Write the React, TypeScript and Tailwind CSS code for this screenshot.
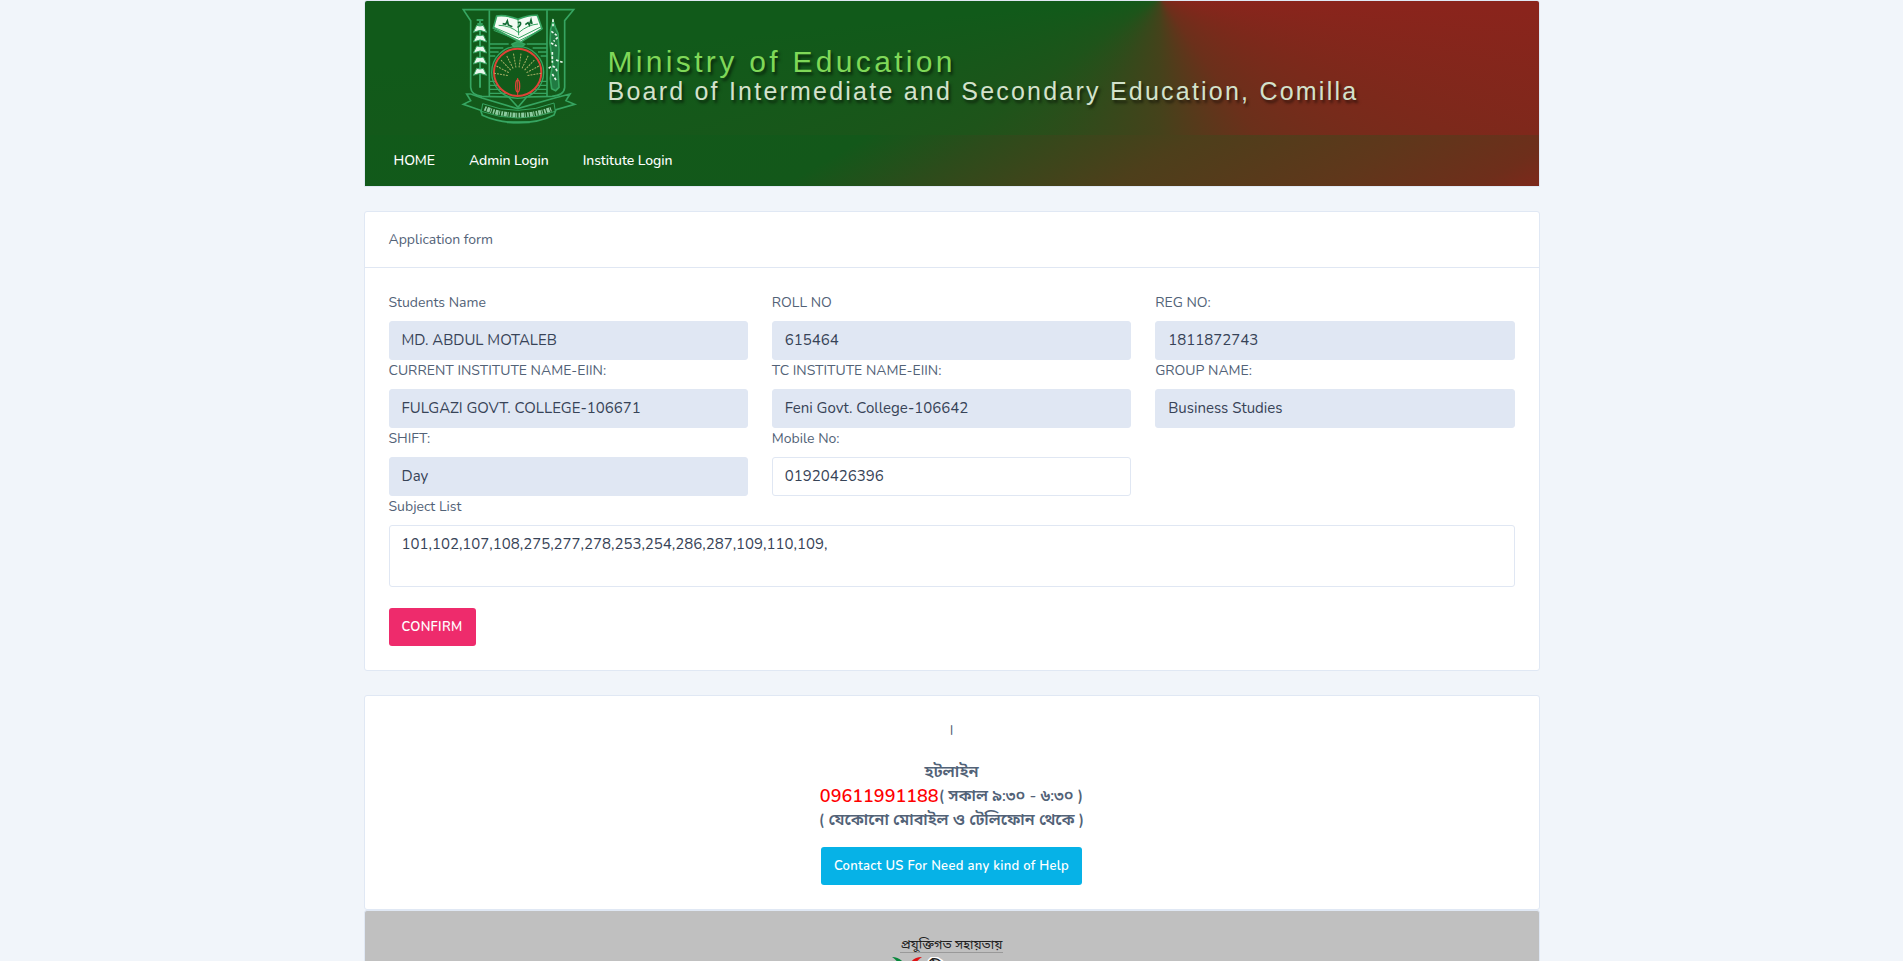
import type { ReactNode } from "react";

function Emblem() {
  const stalk = [88, 117, 150, 183, 217];
  const rays = [-80, -62, -44, -27, -10, 8, 26, 44, 62, 80];
  return (
    <svg viewBox="0 3 420 387" className="h-[129px] w-[140px] shrink-0" fill="none" stroke="#36a561" strokeWidth="5">
      <path d="M40 29H371L344 62V262Q342 286 306 289L230 291L204 322L176 291L96 289Q64 286 62 262V62Z" />
      <path d="M118 31V288M291 31V288" />
      <path d="M118 132H176M230 132H291M118 144H160M248 144H291M118 156H146M264 156H291M118 168H136M272 168H291M118 244H138M270 244H291M118 256H146M262 256H291M118 268H156M252 268H291M118 280H170M238 280H291" strokeWidth="4" />
      <path d="M186 133L204 124L224 133L216 140H192Z" fill="#2f9b57" />
      <path d="M140 48Q170 44 204 58Q238 44 262 46L276 86L211 127L130 84Z" fill="#f4fbf4" />
      <path d="M132 82L206 114L274 80M131 91L208 122L276 88" strokeWidth="3" />
      <path d="M204 58L206 106M146 76Q180 76 206 98Q234 74 264 72" strokeWidth="3" />
      <path d="M158 71l9 2 5-10 3 12 12 5M226 74l8-6 4 7 5-15 3 12M204 68q10-4 7 6q-4 8-9 7" stroke="#126b34" strokeWidth="5" />
      <path d="M90 60V263M80 60H100M82 72H98" strokeWidth="6" />
      {stalk.map((y) => (
        <path key={y} d={`M90 ${y - 10}L80 ${y - 12}L70 ${y + 9}L90 ${y + 3}L110 ${y + 9}L100 ${y - 12}Z`} fill="#e9f7ec" strokeWidth="3" />
      ))}
      <path d="M309 62L302 88L300 130L308 190L301 235L305 266L317 272L327 262L324 210L327 150L324 100L316 82Z" fill="#207b42" />
      <path d="M309 58V80M304 94L320 106M323 112L311 124M303 129L320 138M307 156V188M296 205Q312 190 321 214M318 180L341 188M307 222L318 240" stroke="#eaf7ec" strokeWidth="5" strokeDasharray="8 5" />
      <circle cx="203" cy="217" r="78" strokeWidth="4" />
      <ellipse cx="203" cy="217" rx="71" ry="71" stroke="#df4337" strokeWidth="6" />
      <g stroke="#a9b065" strokeWidth="3" strokeDasharray="6 3">
        {rays.map((angle) => (
          <path key={angle} d="M203 202V158" transform={`rotate(${angle} 203 232)`} />
        ))}
      </g>
      <ellipse cx="203" cy="258" rx="6" ry="18" stroke="#df4337" strokeWidth="4" />
      <path d="M203 234V288" stroke="#df4337" strokeWidth="3" />
      <path d="M62 282L50 282L62 302L40 313L92 331L97 346Q145 368 206 368Q268 368 312 345L318 329L374 313L348 302L360 282L314 294L203 326L96 294Z" strokeWidth="5" />
      <path d="M98 311Q202 352 312 309L316 334Q204 374 94 334Z" strokeWidth="3" />
      <path d="M104 325Q204 365 307 326" stroke="#8ccb9f" strokeWidth="14" strokeDasharray="5 3 9 2 3 4" />
      <path d="M171 367H239" strokeWidth="6" />
    </svg>
  );
}

function Card({ children, className = "" }: { children: ReactNode; className?: string }) {
  return <div className={`border border-[#e0e8f4] ${className}`}>{children}</div>;
}

function Field({ label, value, open = false }: { label: string; value: string; open?: boolean }) {
  return (
    <div>
      <div className="mb-2 h-[21px] text-sm leading-[21px]">{label}</div>
      <div className={`h-[39px] rounded-[3px] border border-[#e0e7f3] px-3 text-[15px] leading-[37px] text-[#374357] ${open ? "bg-white" : "bg-[#e0e7f3]"}`}>
        {value}
      </div>
    </div>
  );
}

export default function App() {
  return (
    <div className="h-screen overflow-hidden bg-[#f1f5fa] font-['Nunito','Noto_Sans_Bengali',sans-serif] text-sm text-[#526277]">
      <div className="mx-auto flex w-[1176px] flex-col">
        <Card className="mb-6 h-[187px] overflow-hidden rounded-t-[3px]">
          <div className="flex h-[134px] bg-[conic-gradient(at_795px_-4px,#8a241c_0deg,#8a241c_92deg,#7c291b_115deg,#6b301b_145deg,#45421b_180deg,#35491b_205deg,#1e541a_235deg,#115a1a_265deg,#115a1a_300deg,#8a241c_300deg)] pl-[85px]">
            <Emblem />
            <div className="pl-[18px] pt-[43px] font-['Liberation_Sans',Arial,sans-serif] whitespace-nowrap [text-shadow:2px_3px_3px_rgba(0,0,0,0.55)]">
              <div className="h-[31px] text-[30px] leading-[36px] tracking-[3.33px] text-[#7fd858]">Ministry of Education</div>
              <div className="text-[25px] leading-[32px] tracking-[2.22px] text-[#d3e2cc]">Board of Intermediate and Secondary Education, Comilla</div>
            </div>
          </div>
          <nav className="flex h-[51px] gap-[34px] bg-[linear-gradient(150deg,#115a1a_0%,#13581a_40%,#2c4c1b_50%,#4d3f1b_66%,#5f371b_83%,#6e2e1b_95%,#7d281b_100%)] pl-[29px] pt-[15px] text-sm leading-[21px] font-medium tracking-[-0.07px] text-white">
            <a>HOME</a>
            <a>Admin Login</a>
            <a>Institute Login</a>
          </nav>
        </Card>

        <Card className="mb-6 h-[460px] rounded-[3px] bg-white">
          <div className="h-14 border-b border-[#e0e7f3] px-6 pt-[17px] leading-[21px]">Application form</div>
          <div className="p-6">
            <div className="grid grid-cols-3 gap-x-6">
              <Field label="Students Name" value="MD. ABDUL MOTALEB" />
              <Field label="ROLL NO" value="615464" />
              <Field label="REG NO:" value="1811872743" />
              <Field label="CURRENT INSTITUTE NAME-EIIN:" value="FULGAZI GOVT. COLLEGE-106671" />
              <Field label="TC INSTITUTE NAME-EIIN:" value="Feni Govt. College-106642" />
              <Field label="GROUP NAME:" value="Business Studies" />
              <Field label="SHIFT:" value="Day" />
              <Field label="Mobile No:" value="01920426396" open />
            </div>
            <div className="mb-2 leading-[21px]">Subject List</div>
            <div className="mb-[21px] h-[62px] rounded-[3px] border border-[#e0e7f3] px-3 text-[15px] leading-[37px] text-[#374357]">
              101,102,107,108,275,277,278,253,254,286,287,109,110,109,
            </div>
            <button className="h-[38px] w-[87px] rounded-[3px] bg-[#ee2b6c] text-[13px] font-semibold tracking-[0.3px] text-white">CONFIRM</button>
          </div>
        </Card>

        <Card className="h-[215px] rounded-[3px] bg-white pt-6 text-center">
          <div className="leading-[21px]">I</div>
          <div className="mt-[19px] h-6 text-[16.5px] font-semibold leading-6">হটলাইন</div>
          <div className="flex h-6 items-center justify-center text-[16.1px] font-semibold">
            <span className="text-lg font-semibold text-[#ff0000]">09611991188</span>
            <span>( সকাল ৯:৩০ - ৬:৩০ )</span>
          </div>
          <div className="h-6 text-[16.1px] font-semibold leading-6">( যেকোনো মোবাইল ও টেলিফোন থেকে )</div>
          <button className="mt-[15px] h-[38px] w-[261px] rounded-[3px] bg-[#06b2e7] text-[13px] font-semibold tracking-[0.3px] text-white">
            Contact US For Need any kind of Help
          </button>
        </Card>

        <Card className="h-[120px] rounded-t-[3px] bg-[#c0c0c0] pt-6 text-center">
          <div className="mx-auto h-[18px] w-[103px] border-b border-[#999] text-[13px] leading-[20px] whitespace-nowrap text-[#222]">প্রযুক্তিগত সহায়তায়</div>
          <svg viewBox="0 0 120 24" className="mx-auto mt-1 h-6 w-[120px]">
            <path d="M0 0Q7 0 12 6L10 12Q6 4 0 0Z" fill="#07883b" />
            <path d="M30 0Q21 0 18 7L20 12Q24 4 30 0Z" fill="#df1114" />
            <text x="36" y="20" fontSize="20" fill="#222" stroke="#fff" strokeWidth="3" paintOrder="stroke">টি</text>
          </svg>
        </Card>
      </div>
    </div>
  );
}
